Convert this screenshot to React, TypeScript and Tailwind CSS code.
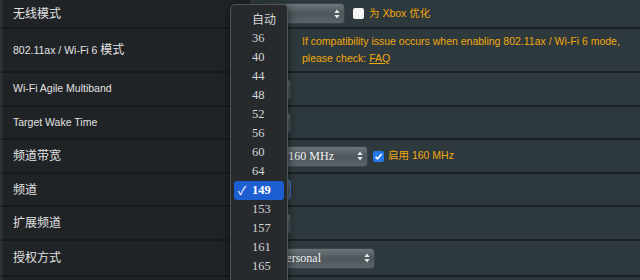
import React from 'react'

const channels = ['自动', '36', '40', '44', '48', '52', '56', '60', '64', '149', '153', '157', '161', '165']

/** Small up/down arrows drawn at the right end of a select box. */
function Arrows() {
	return (
		<svg width="6" height="10" viewBox="0 0 6 10" className="shrink-0">
			<path d="M3 0.5 L5.6 4 L0.4 4 Z" fill="#e6e9ea" />
			<path d="M3 9.5 L5.6 6 L0.4 6 Z" fill="#e6e9ea" />
		</svg>
	)
}

type SelectProps = {
	width: string
	text?: string
	gap?: string
	focused?: boolean
}

/** Grey gradient select box as in the router admin page. */
function Select({ width, text, gap = 'gap-0', focused }: SelectProps) {
	return (
		<div
			className={`flex h-[21px] ${width} ${gap} shrink-0 items-center justify-end overflow-hidden rounded-[4px] border bg-linear-to-b from-[#6c767b] via-[#4d565a] to-[#59636a] pr-[4px] ${
				focused ? 'border-[#2f6fd6]' : 'border-[#3a4347]'
			}`}
		>
			{text && (
				<span className="shrink-0 whitespace-nowrap font-['Liberation_Serif',serif] text-[12px] text-[#f2f2f2]">
					{text}
				</span>
			)}
			<Arrows />
		</div>
	)
}

function Row({
	height,
	label,
	children,
}: {
	height: string
	label: React.ReactNode
	children?: React.ReactNode
}) {
	return (
		<div className={`flex ${height}`}>
			<div className="flex w-[250px] shrink-0 items-center border-b-2 border-l-[3px] border-b-[#161a1c] border-l-[#2b3034] bg-[#1f2326] pl-[10px] text-[10.5px] text-[#e2e2e2]">
				{label}
			</div>
			<div className="flex flex-1 items-center border-b-2 border-[#1a2124] bg-[#2e393d] pl-[8px]">
				{children}
			</div>
		</div>
	)
}

const cjk = 'text-[12px]'

export default function App() {
	return (
		<div className="relative h-[280px] w-[640px] overflow-hidden bg-[#2e393d] font-['Liberation_Sans','Noto_Sans_CJK_SC',sans-serif]">
			<Row height="h-[29px]" label={<span className={cjk}>无线模式</span>}>
				<Select width="w-[87px]" />
				<span className="ml-[8px] h-[11px] w-[11px] rounded-[2px] bg-[#f4f4f4]" />
				<span className="ml-[5px] whitespace-nowrap text-[10.5px] text-[#f0a70c]">为 Xbox 优化</span>
			</Row>
			<Row
				height="h-[44px]"
				label={
					<span>
						802.11ax / Wi-Fi 6 <span className={cjk}>模式</span>
					</span>
				}
			>
				<div className="whitespace-nowrap pl-[44px] text-[10.5px] leading-[17px] text-[#f0a70c]">
					<div>If compatibility issue occurs when enabling 802.11ax / Wi-Fi 6 mode,</div>
					<div>
						please check: <span className="underline">FAQ</span>
					</div>
				</div>
			</Row>
			<Row height="h-[34px]" label="Wi-Fi Agile Multiband">
				<Select width="w-[33px]" />
			</Row>
			<Row height="h-[33px]" label="Target Wake Time">
				<Select width="w-[33px]" />
			</Row>
			<Row height="h-[34px]" label={<span className={cjk}>频道带宽</span>}>
				<Select width="w-[110px]" text="20/40/80/160 MHz" gap="gap-[23px]" />
				<span className="ml-[5px] flex h-[11px] w-[11px] items-center justify-center rounded-[2px] bg-[#2377e8]">
					<svg width="9" height="9" viewBox="0 0 9 9">
						<path d="M1.5 4.8 L3.6 6.8 L7.6 2" stroke="#fff" strokeWidth="1.6" fill="none" />
					</svg>
				</span>
				<span className="ml-[4px] whitespace-nowrap text-[10.5px] text-[#f0a70c]">启用 160 MHz</span>
			</Row>
			<Row height="h-[33px]" label={<span className={cjk}>频道</span>}>
				<Select width="w-[33px]" focused />
			</Row>
			<Row height="h-[34px]" label={<span className={cjk}>扩展频道</span>}>
				<Select width="w-[33px]" />
			</Row>
			<Row height="h-[36px]" label={<span className={cjk}>授权方式</span>}>
				<Select width="w-[117px]" text="WPA2-Personal" gap="gap-[43px]" />
			</Row>
			<Row height="h-[10px]" label="" />

			{/* open channel dropdown */}
			<div className="absolute left-[230px] top-[4px] h-[290px] w-[58px] rounded-t-[5px] border border-[#4e5357] bg-[#272a2d] pt-[5px] shadow-[0_2px_8px_rgba(0,0,0,0.6)]">
				{channels.map((c) => {
					const on = c === '149'
					return (
						<div
							key={c}
							className={`mx-[3px] flex h-[19px] items-center rounded-[3px] ${on ? 'bg-[#1d5fd3]' : ''}`}
						>
							<span className="w-[18px] pl-[4px] text-[12px] text-white">{on ? '✓' : ''}</span>
							<span
								className={`font-['Liberation_Serif','Noto_Sans_CJK_SC',serif] text-[12.5px] ${
									on ? 'font-bold text-white' : 'text-[#d4d6d8]'
								} ${c === '自动' ? 'text-[12px]' : ''}`}
							>
								{c}
							</span>
						</div>
					)
				})}
			</div>
		</div>
	)
}
